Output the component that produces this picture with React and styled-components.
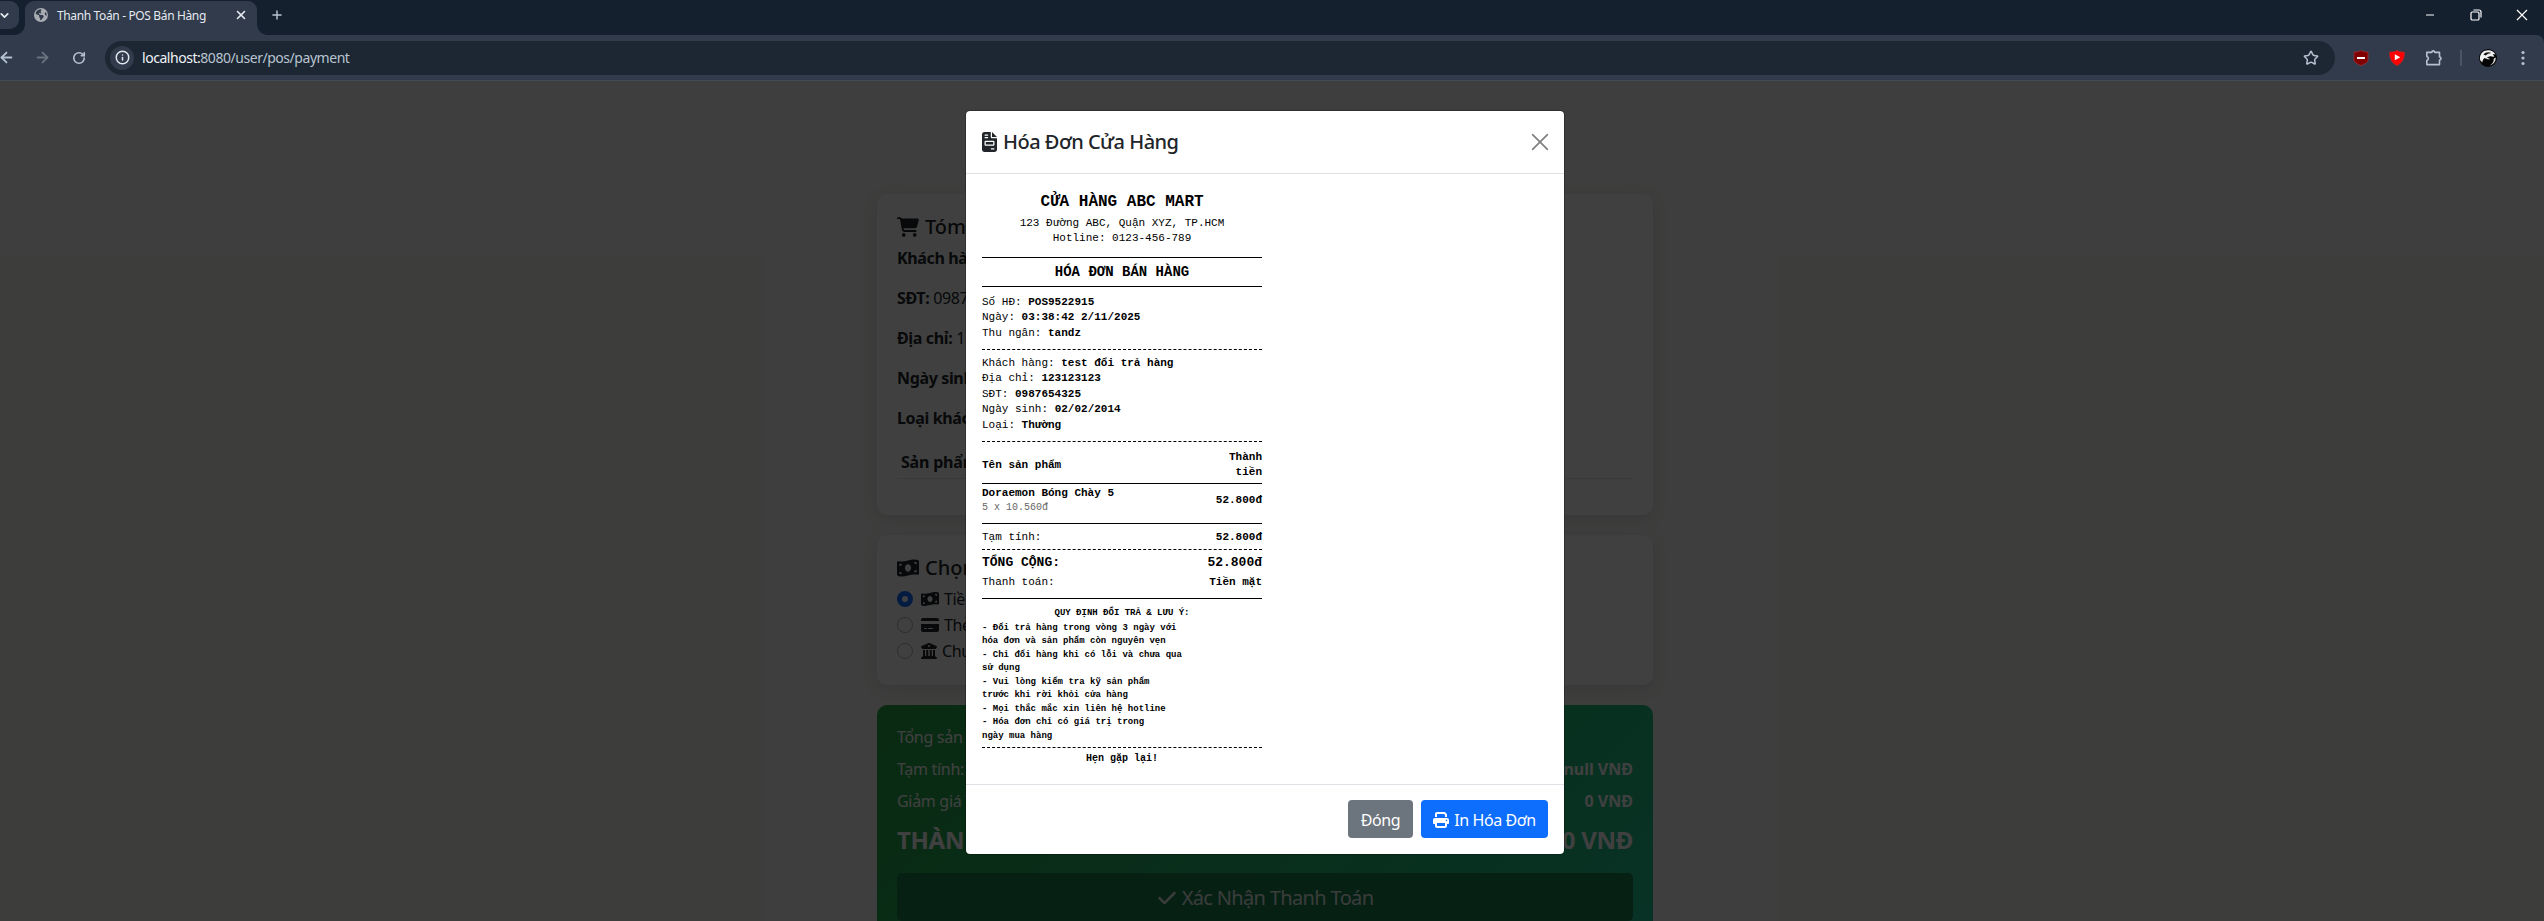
import React from 'react';
import styled, { createGlobalStyle } from 'styled-components';
import { ArrowLeft, ArrowRight, RotateCw, X, Plus, ChevronDown, Info, Star, Minus } from 'lucide-react';
import { FaCartShopping, FaMoneyBillWave, FaCreditCard, FaBuildingColumns, FaCheck, FaPrint, FaFileInvoice, FaEarthAmericas } from 'react-icons/fa6';

const Global = createGlobalStyle`
  *, *::before, *::after { box-sizing: border-box; }
  html, body { margin: 0; height: 100%; overflow: hidden; }
  body {
    font-family: "Noto Sans", "Open Sans", sans-serif;
    font-size: 16px;
    line-height: 24px;
    color: #212529;
    background: #3d3e3c;
  }
  svg { display: block; flex: none; }
`;

const Window = styled.div`
  display: flex;
  flex-direction: column;
  height: 921px;
  width: 2544px;
  overflow: hidden;
`;

/* ---------- browser frame ---------- */
const TabStrip = styled.header`
  display: flex;
  height: 35px;
  background: #15202f;
`;
const TabSearch = styled.div`
  width: 19px;
  height: 28px;
  margin: 1px 6px 0 0;
  padding: 8px 0 0;
  background: #313b4b;
  border-radius: 0 9px 9px 0;
  color: #e3e8ee;
  svg { margin-left: -2px; }
`;
const Tab = styled.div`
  position: relative;
  display: flex;
  align-items: center;
  width: 232px;
  height: 34px;
  margin-top: 1px;
  padding: 0 9px 6px;
  background: #313b4b;
  border-radius: 9px 9px 0 0;
  color: #e4e9f0;
  &::before, &::after {
    content: "";
    position: absolute;
    bottom: 0;
    width: 10px;
    height: 10px;
  }
  &::before { left: -10px; background: radial-gradient(circle at 0 0, transparent 9.5px, #313b4b 10px); }
  &::after { right: -10px; background: radial-gradient(circle at 100% 0, transparent 9.5px, #313b4b 10px); }
`;
const TabTitle = styled.span`
  flex: 1;
  margin: 2px 0 0 9px;
  font-size: 12px;
  line-height: 18px;
  letter-spacing: -0.36px;
  white-space: nowrap;
`;
const NewTab = styled.div`
  margin: 8px 0 0 13px;
  color: #b9c4d2;
`;
const WindowButtons = styled.div`
  display: flex;
  gap: 34px;
  margin: 9px 16px 0 auto;
  color: #fff;
`;
const ToolbarBack = styled.div`
  background: #15202f;
`;
const Toolbar = styled.div`
  display: flex;
  align-items: center;
  height: 46px;
  background: #313b4b;
  border-bottom: 1px solid #454b55;
  border-top-right-radius: 8px;
  color: #b4c0d0;
`;
const NavButtons = styled.nav`
  display: flex;
  align-items: center;
  width: 105px;
  svg:nth-child(1) { margin-left: -2px; }
  svg:nth-child(2) { margin-left: 19px; color: #69727f; }
  svg:nth-child(3) { margin-left: 21px; }
`;
const Omnibox = styled.div`
  display: flex;
  align-items: center;
  width: 2230px;
  height: 34px;
  padding: 0 16px 0 5px;
  border-radius: 17px;
  background: #1c2733;
`;
const SiteInfo = styled.div`
  display: flex;
  align-items: center;
  justify-content: center;
  width: 24px;
  height: 24px;
  border-radius: 12px;
  background: #313b4b;
  color: #e0e6ee;
`;
const Url = styled.div`
  flex: 1;
  margin: 1px 0 0 8px;
  font-size: 14px;
  letter-spacing: -0.46px;
  color: #b8c3cf;
  b { font-weight: 400; color: #eef2f6; }
`;
const Extensions = styled.div`
  display: flex;
  align-items: center;
  gap: 20px;
  margin-left: 18px;
`;
const Divider = styled.i`
  width: 2px;
  height: 16px;
  margin: 0 -3px 0 -3px;
  background: #4a5464;
`;
const Profile = styled.span`
  margin-right: 4px;
`;

/* ---------- checkout page ---------- */
const Page = styled.main`
  position: relative;
  flex: 1;
  padding-top: 113px;
  background: #f3f6f1;
`;
const Column = styled.div`
  display: flex;
  flex-direction: column;
  gap: 20px;
  width: 776px;
  margin-left: 877px;
`;
const Card = styled.section`
  height: ${p => p.$h}px;
  padding: 20px;
  border-radius: 10px;
  background: #fff;
  box-shadow: 0 4px 15px rgba(0, 0, 0, 0.1);
`;
const CardTitle = styled.h2`
  display: flex;
  align-items: center;
  gap: 6px;
  height: 24px;
  margin: 0 0 8px;
  padding-top: 1px;
  font-size: 20px;
  font-weight: 500;
  white-space: nowrap;
`;
const Field = styled.p`
  margin: 0 0 16px;
  letter-spacing: -0.35px;
  white-space: nowrap;
  b { font-weight: 700; }
`;
const ProductHead = styled.div`
  height: 33px;
  padding: 4px 4px;
  border-bottom: 1px solid #dee2e6;
  font-weight: 700;
  letter-spacing: -0.2px;
`;
const Method = styled.label`
  display: flex;
  align-items: center;
  height: 24px;
  margin-bottom: 2px;
  letter-spacing: -0.35px;
`;
const Radio = styled.span`
  width: 16px;
  height: 16px;
  margin-right: 8px;
  border: ${p => (p.$on ? '5px solid #0d6efd' : '1px solid #adb5bd')};
  border-radius: 50%;
  background: #fff;
`;
const MethodText = styled.span`
  margin-left: 5px;
`;
const Summary = styled.section`
  height: 260px;
  padding: 20px;
  border-radius: 10px;
  background: linear-gradient(135deg, #28a745, #20c997);
  color: #fff;
`;
const SummaryRow = styled.div`
  display: flex;
  justify-content: space-between;
  height: ${p => (p.$big ? 36 : 24)}px;
  margin-bottom: ${p => (p.$big ? 16 : 8)}px;
  font-size: ${p => (p.$big ? 24 : 16)}px;
  line-height: ${p => (p.$big ? 37 : 25)}px;
  font-weight: ${p => (p.$big ? 700 : 400)};
  letter-spacing: -0.3px;
  b { letter-spacing: 0; }
`;
const Confirm = styled.div`
  display: flex;
  align-items: center;
  justify-content: center;
  gap: 5px;
  height: 48px;
  padding-top: 1px;
  border-radius: 5px;
  background: #187f51;
  color: #e8efea;
  font-size: 20px;
  letter-spacing: -0.65px;
`;

/* ---------- modal ---------- */
const Backdrop = styled.div`
  position: absolute;
  inset: 0;
  padding: 29px 0 0 965px;
  background: rgba(0, 0, 0, 0.75);
`;
const Dialog = styled.div`
  display: flex;
  flex-direction: column;
  width: 600px;
  height: 745px;
  border: 1px solid rgba(0, 0, 0, 0.25);
  border-radius: 5px;
  background: #fff;
  background-clip: padding-box;
`;
const DialogHead = styled.div`
  display: flex;
  align-items: center;
  height: 63px;
  padding: 0 15px 0 16px;
  border-bottom: 1px solid #dee2e6;
  > svg:first-child { width: 15px; }
`;
const DialogTitle = styled.h1`
  flex: 1;
  margin: 1px 0 0 6px;
  font-size: 20px;
  font-weight: 500;
  letter-spacing: -0.5px;
`;
const DialogBody = styled.div`
  flex: 1;
  padding: 16px;
`;
const DialogFoot = styled.div`
  display: flex;
  align-items: center;
  justify-content: flex-end;
  gap: 8px;
  height: 71px;
  padding: 0 16px;
  border-top: 1px solid #dee2e6;
`;
const Button = styled.button`
  display: flex;
  align-items: center;
  justify-content: center;
  gap: 5px;
  width: ${p => p.$w}px;
  height: 38px;
  padding: 1px 0 0;
  border: 0;
  border-radius: 4px;
  background: ${p => p.$bg};
  color: #fff;
  font: inherit;
  letter-spacing: -0.4px;
`;

/* ---------- receipt ---------- */
const Receipt = styled.div`
  width: 280px;
  color: #000;
  font-family: "Liberation Mono", monospace;
  font-size: 11px;
  line-height: 15.4px;
`;
const Section = styled.div`
  height: ${p => p.$h}px;
  padding-top: ${p => p.$pt}px;
  border-bottom: ${p => (p.$dash ? '1px dashed #000' : p.$line ? '1px solid #000' : '0')};
  text-align: ${p => (p.$center ? 'center' : 'left')};
  white-space: nowrap;
`;
const Shop = styled.div`
  height: 25.4px;
  font-size: 16px;
  font-weight: 700;
  line-height: 22px;
`;
const InvoiceTitle = styled.div`
  font-size: 14px;
  font-weight: 700;
  line-height: 20px;
`;
const Split = styled.div`
  display: flex;
  align-items: center;
  justify-content: space-between;
  font-weight: ${p => (p.$bold ? 700 : 400)};
  font-size: ${p => (p.$total ? 13 : 11)}px;
  line-height: ${p => (p.$total ? 18.2 : 15.4)}px;
  margin-bottom: ${p => (p.$total ? 3.2 : 0)}px;
`;
const Right = styled.div`
  text-align: right;
`;
const Quantity = styled.div`
  color: #666;
  font-size: 10px;
  font-weight: 400;
  line-height: 14px;
`;
const Notes = styled.div`
  font-size: 9px;
  font-weight: 700;
  line-height: 13.5px;
`;
const NotesTitle = styled.div`
  height: 15px;
  text-align: center;
`;
const Bye = styled.div`
  font-size: 10px;
  font-weight: 700;
  line-height: 14px;
`;

const info = [['Số HĐ', 'POS9522915'], ['Ngày', '03:38:42 2/11/2025'], ['Thu ngân', 'tandz']];
const customer = [['Khách hàng', 'test đổi trả hàng'], ['Địa chỉ', '123123123'], ['SĐT', '0987654325'], ['Ngày sinh', '02/02/2014'], ['Loại', 'Thường']];
const notes = [
  '- Đổi trả hàng trong vòng 3 ngày với',
  'hóa đơn và sản phẩm còn nguyên vẹn',
  '- Chỉ đổi hàng khi có lỗi và chưa qua',
  'sử dụng',
  '- Vui lòng kiểm tra kỹ sản phẩm',
  'trước khi rời khỏi cửa hàng',
  '- Mọi thắc mắc xin liên hệ hotline',
  '- Hóa đơn chỉ có giá trị trong',
  'ngày mua hàng',
];

const Lines = ({ items }) => items.map(([k, v]) => <div key={k}>{k}: <b>{v}</b></div>);

const Restore = () => (
  <svg width="12" height="12" viewBox="0 0 12 12" fill="none" stroke="currentColor" strokeWidth="1.2">
    <rect x="1" y="3" width="8" height="8" rx="1.3" />
    <path d="M3.4 1H9a2 2 0 0 1 2 2v5.6" />
  </svg>
);
const UBlock = () => (
  <svg width="16" height="16" viewBox="0 0 16 16">
    <path d="M8 .5C6 1.8 3.5 2 1 2v8c0 2.6 3.5 3.8 7 5.6 3.500-1.800 7-3 7-5.600V2C12.500 2 10 1.800 8 .5Z" fill="#800000" stroke="#a8323a" strokeWidth=".7" />
    <rect x="4" y="7" width="8" height="2" fill="#fff" />
  </svg>
);
const PlayShield = () => (
  <svg width="16" height="16" viewBox="0 0 16 16">
    <path d="M8 .5C6 1.700 3.200 2.200.6 2.200c0 6 1.800 10.600 7.400 13.300 5.600-2.700 7.400-7.300 7.400-13.300C12.800 2.200 10 1.700 8 .5Z" fill="#f00" stroke="#b52a30" strokeWidth=".8" />
    <path d="M5.800 4.300v6L11.300 7.300Z" fill="#fff" />
  </svg>
);
const Puzzle = () => (
  <svg width="18" height="18" viewBox="0 0 18 18" fill="none" stroke="currentColor" strokeWidth="1.600" strokeLinejoin="round">
    <path d="M1.800 3.400h5a1.500 1.500 0 0 1 3 0h4.700v4.600a1.500 1.500 0 0 1 0 3v4.600H1.800v-4a2.200 2.200 0 0 0 0-4.200Z" />
  </svg>
);
const Avatar = () => (
  <svg width="18" height="18" viewBox="0 0 18 18">
    <circle cx="9" cy="9" r="9" fill="#050505" />
    <path d="M.9 9.500C.9 4.600 4.300 1.200 9.200 1.200c3.400 0 6 1.600 7.200 4.400l-2.700-.5 1.600 2.500c-1.600.3-2.600-.6-4.100-.4-1.600.3-2.200 1.300-3.700 1.300 1 1 2.300.8 3.600 1.500-2 .9-3.800-.3-5.200-1-1.300.7-2.400 1.700-2.500 4.300C1.900 12.500.9 11.300.9 9.500Z" fill="#f2f2f2" />
    <path d="M4.500 5.600C6.300 3.200 9 2.600 12.500 4L9 4.700 6.600 6.600Z" fill="#111" />
    <path d="M16.700 8.500c.2 3.800-2.100 6.900-5.700 7.900 2.600-1.600 4-4 3.700-6.700Z" fill="#ddd" />
  </svg>
);
const Dots = () => (
  <svg width="4" height="16" viewBox="0 0 4 16" fill="currentColor">
    <circle cx="2" cy="2.500" r="1.600" /><circle cx="2" cy="8" r="1.600" /><circle cx="2" cy="13.500" r="1.600" />
  </svg>
);
const CloseMark = () => (
  <svg width="18" height="18" viewBox="0 0 18 18" stroke="#808080" strokeWidth="1.700" strokeLinecap="round">
    <path d="M1.600 1.600 16.400 16.400M16.400 1.600 1.600 16.400" />
  </svg>
);

export default function App() {
  return (
    <Window>
      <Global />
      <TabStrip>
        <TabSearch><ChevronDown size={13} strokeWidth={3.2} /></TabSearch>
        <Tab>
          <FaEarthAmericas size={14} color="#a9adb3" />
          <TabTitle>Thanh Toán - POS Bán Hàng</TabTitle>
          <X size={14} strokeWidth={2.8} />
        </Tab>
        <NewTab><Plus size={14} strokeWidth={2.5} /></NewTab>
        <WindowButtons>
          <Minus size={12} strokeWidth={2.4} />
          <Restore />
          <svg width="12" height="12" viewBox="0 0 12 12" stroke="currentColor" strokeWidth="1.2"><path d="M1 1l10 10M11 1L1 11" /></svg>
        </WindowButtons>
      </TabStrip>
      <ToolbarBack>
        <Toolbar>
          <NavButtons>
            <ArrowLeft size={17} strokeWidth={2.5} />
            <ArrowRight size={17} strokeWidth={2.5} />
            <RotateCw size={14} strokeWidth={2.8} />
          </NavButtons>
          <Omnibox>
            <SiteInfo><Info size={15} strokeWidth={2.4} /></SiteInfo>
            <Url><b>localhost:</b>8080/user/pos/payment</Url>
            <Star size={16} strokeWidth={2.3} />
          </Omnibox>
          <Extensions>
            <UBlock />
            <PlayShield />
            <Puzzle />
            <Divider />
            <Profile><Avatar /></Profile>
            <Dots />
          </Extensions>
        </Toolbar>
      </ToolbarBack>
      <Page>
        <Column>
          <Card $h={321}>
            <CardTitle><FaCartShopping size={22} />Tóm</CardTitle>
            <Field><b>Khách hàng:</b></Field>
            <Field><b>SĐT:</b> 0987</Field>
            <Field><b>Địa chỉ:</b> 123</Field>
            <Field><b>Ngày sinh:</b></Field>
            <Field><b>Loại khách:</b></Field>
            <ProductHead>Sản phẩm</ProductHead>
          </Card>
          <Card $h={150}>
            <CardTitle><FaMoneyBillWave size={22} />Chọn</CardTitle>
            <Method><Radio $on /><FaMoneyBillWave size={18} /><MethodText>Tiền</MethodText></Method>
            <Method><Radio /><FaCreditCard size={18} /><MethodText>Thẻ</MethodText></Method>
            <Method><Radio /><FaBuildingColumns size={16} /><MethodText>Chu</MethodText></Method>
          </Card>
          <Summary>
            <SummaryRow><span>Tổng sản</span></SummaryRow>
            <SummaryRow><span>Tạm tính:</span><b>null VNĐ</b></SummaryRow>
            <SummaryRow><span>Giảm giá V</span><b>0 VNĐ</b></SummaryRow>
            <SummaryRow $big><span>THÀNH</span><span>0 VNĐ</span></SummaryRow>
            <Confirm><FaCheck size={20} />Xác Nhận Thanh Toán</Confirm>
          </Summary>
        </Column>
        <Backdrop>
          <Dialog>
            <DialogHead>
              <FaFileInvoice size={20} />
              <DialogTitle>Hóa Đơn Cửa Hàng</DialogTitle>
              <CloseMark />
            </DialogHead>
            <DialogBody>
              <Receipt>
                <Section $h={68} $pt={1} $center $line>
                  <Shop>CỬA HÀNG ABC MART</Shop>
                  <div>123 Đường ABC, Quận XYZ, TP.HCM</div>
                  <div>Hotline: 0123-456-789</div>
                </Section>
                <Section $h={29} $pt={4} $center $line><InvoiceTitle>HÓA ĐƠN BÁN HÀNG</InvoiceTitle></Section>
                <Section $h={63} $pt={8.4} $dash><Lines items={info} /></Section>
                <Section $h={92} $pt={6.4} $dash><Lines items={customer} /></Section>
                <Section $h={42} $pt={8.4} $line>
                  <Split $bold><div>Tên sản phẩm</div><Right>Thành<br />tiền</Right></Split>
                </Section>
                <Section $h={40} $pt={2.4} $line>
                  <Split $bold>
                    <div>Doraemon Bóng Chày 5<Quantity>5 x 10.560đ</Quantity></div>
                    <Right>52.800đ</Right>
                  </Split>
                </Section>
                <Section $h={26} $pt={6.1} $dash>
                  <Split><div>Tạm tính:</div><b>52.800đ</b></Split>
                </Section>
                <Section $h={49} $pt={4.2} $line>
                  <Split $total $bold><div>TỔNG CỘNG:</div><div>52.800đ</div></Split>
                  <Split><div>Thanh toán:</div><b>Tiền mặt</b></Split>
                </Section>
                <Section $h={149} $pt={8.1} $dash>
                  <Notes>
                    <NotesTitle>QUY ĐỊNH ĐỔI TRẢ &amp; LƯU Ý:</NotesTitle>
                    {notes.map(n => <div key={n}>{n}</div>)}
                  </Notes>
                </Section>
                <Section $h={20} $pt={4.8} $center><Bye>Hẹn gặp lại!</Bye></Section>
              </Receipt>
            </DialogBody>
            <DialogFoot>
              <Button $w={65} $bg="#6c757d">Đóng</Button>
              <Button $w={127} $bg="#0d6efd"><FaPrint size={16} />In Hóa Đơn</Button>
            </DialogFoot>
          </Dialog>
        </Backdrop>
      </Page>
    </Window>
  );
}
